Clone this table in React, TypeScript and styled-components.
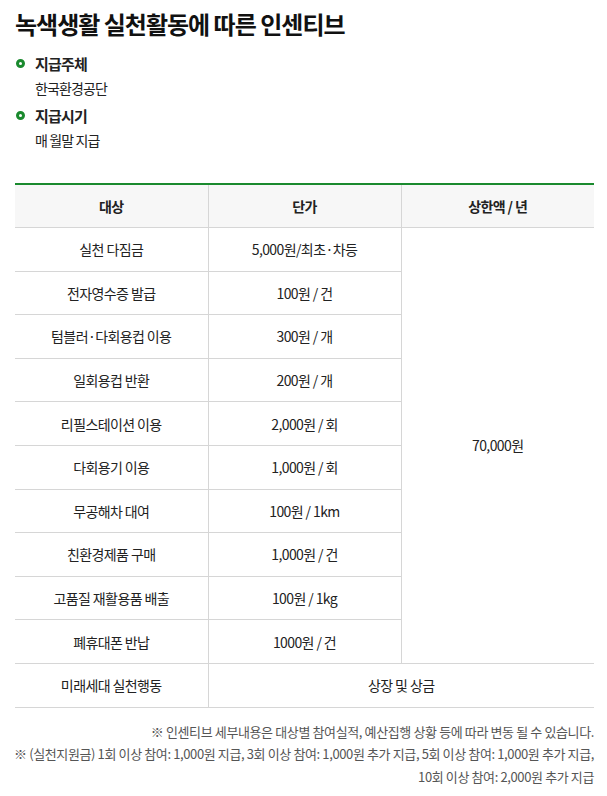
import React from 'react';
import styled, { createGlobalStyle } from 'styled-components';

const GlobalStyle = createGlobalStyle`
  body {
    margin: 0;
    background: #fff;
    font-family: "Noto Sans CJK KR", "Noto Sans", sans-serif;
    color: #222;
  }
`;

const Page = styled.div`
  padding: 8px 13px 0 15px;
`;

const Title = styled.h2`
  margin: 0;
  font-size: 24px;
  font-weight: 700;
  letter-spacing: -1px;
  line-height: 32px;
  color: #111;
`;

const InfoList = styled.ul`
  list-style: none;
  margin: 12px 0 0;
  padding: 0;
  display: flex;
  flex-direction: column;
  gap: 4px;
`;

const InfoItem = styled.li`
  display: flex;
  flex-direction: column;
`;

const InfoLabel = styled.span`
  position: relative;
  padding-left: 20px;
  font-size: 15px;
  font-weight: 700;
  letter-spacing: -0.8px;
  line-height: 24px;

  &::before {
    content: '';
    position: absolute;
    left: 1px;
    top: 7px;
    width: 3px;
    height: 3px;
    border: 3px solid #1a8a2e;
    border-radius: 50%;
  }
`;

const InfoValue = styled.span`
  padding-left: 20px;
  font-size: 14px;
  letter-spacing: -0.9px;
  line-height: 24px;
  color: #222;
`;

const Table = styled.table`
  width: 100%;
  margin-top: 31px;
  border-collapse: collapse;
  table-layout: fixed;
  border-top: 2px solid #1a8a2e;
`;

const Th = styled.th`
  height: 42px;
  padding: 0;
  background: #f7f7f7;
  font-size: 14px;
  font-weight: 700;
  letter-spacing: -0.6px;
  border-bottom: 1px solid #d6d6d6;
  border-left: 1px solid #d6d6d6;
  &:first-child { border-left: 0; }
`;

const Td = styled.td`
  height: 42.6px;
  padding: 0;
  text-align: center;
  font-size: 14px;
  letter-spacing: -0.6px;
  color: #222;
  border-bottom: 1px solid #d6d6d6;
  border-left: 1px solid #d6d6d6;
  &:first-child { border-left: 0; }
`;

const Notes = styled.div`
  margin-top: 13px;
  display: flex;
  flex-direction: column;
  align-items: flex-end;
`;

const NoteLine = styled.p`
  margin: 0;
  white-space: nowrap;
  font-size: 13px;
  line-height: 22.5px;
  letter-spacing: -0.38px;
  color: #555;
`;

const rows: [string, string][] = [
  ['실천 다짐금', '5,000원/최초·차등'],
  ['전자영수증 발급', '100원 / 건'],
  ['텀블러·다회용컵 이용', '300원 / 개'],
  ['일회용컵 반환', '200원 / 개'],
  ['리필스테이션 이용', '2,000원 / 회'],
  ['다회용기 이용', '1,000원 / 회'],
  ['무공해차 대여', '100원 / 1km'],
  ['친환경제품 구매', '1,000원 / 건'],
  ['고품질 재활용품 배출', '100원 / 1kg'],
  ['폐휴대폰 반납', '1000원 / 건'],
];

const notes = [
  '※ 인센티브 세부내용은 대상별 참여실적, 예산집행 상황 등에 따라 변동 될 수 있습니다.',
  '※ (실천지원금) 1회 이상 참여: 1,000원 지급, 3회 이상 참여: 1,000원 추가 지급, 5회 이상 참여: 1,000원 추가 지급,',
  '10회 이상 참여: 2,000원 추가 지급',
];

export default function App() {
  return (
    <>
      <GlobalStyle />
      <Page>
        <Title>녹색생활 실천활동에 따른 인센티브</Title>
        <InfoList>
          <InfoItem>
            <InfoLabel>지급주체</InfoLabel>
            <InfoValue>한국환경공단</InfoValue>
          </InfoItem>
          <InfoItem>
            <InfoLabel>지급시기</InfoLabel>
            <InfoValue>매 월말 지급</InfoValue>
          </InfoItem>
        </InfoList>
        <Table>
          <thead>
            <tr>
              <Th>대상</Th>
              <Th>단가</Th>
              <Th>상한액 / 년</Th>
            </tr>
          </thead>
          <tbody>
            {rows.map(([target, price], i) => (
              <tr key={target}>
                <Td>{target}</Td>
                <Td>{price}</Td>
                {i === 0 && <Td rowSpan={rows.length}>70,000원</Td>}
              </tr>
            ))}
            <tr>
              <Td>미래세대 실천행동</Td>
              <Td colSpan={2}>상장 및 상금</Td>
            </tr>
          </tbody>
        </Table>
        <Notes>
          {notes.map((n) => (
            <NoteLine key={n}>{n}</NoteLine>
          ))}
        </Notes>
      </Page>
    </>
  );
}
